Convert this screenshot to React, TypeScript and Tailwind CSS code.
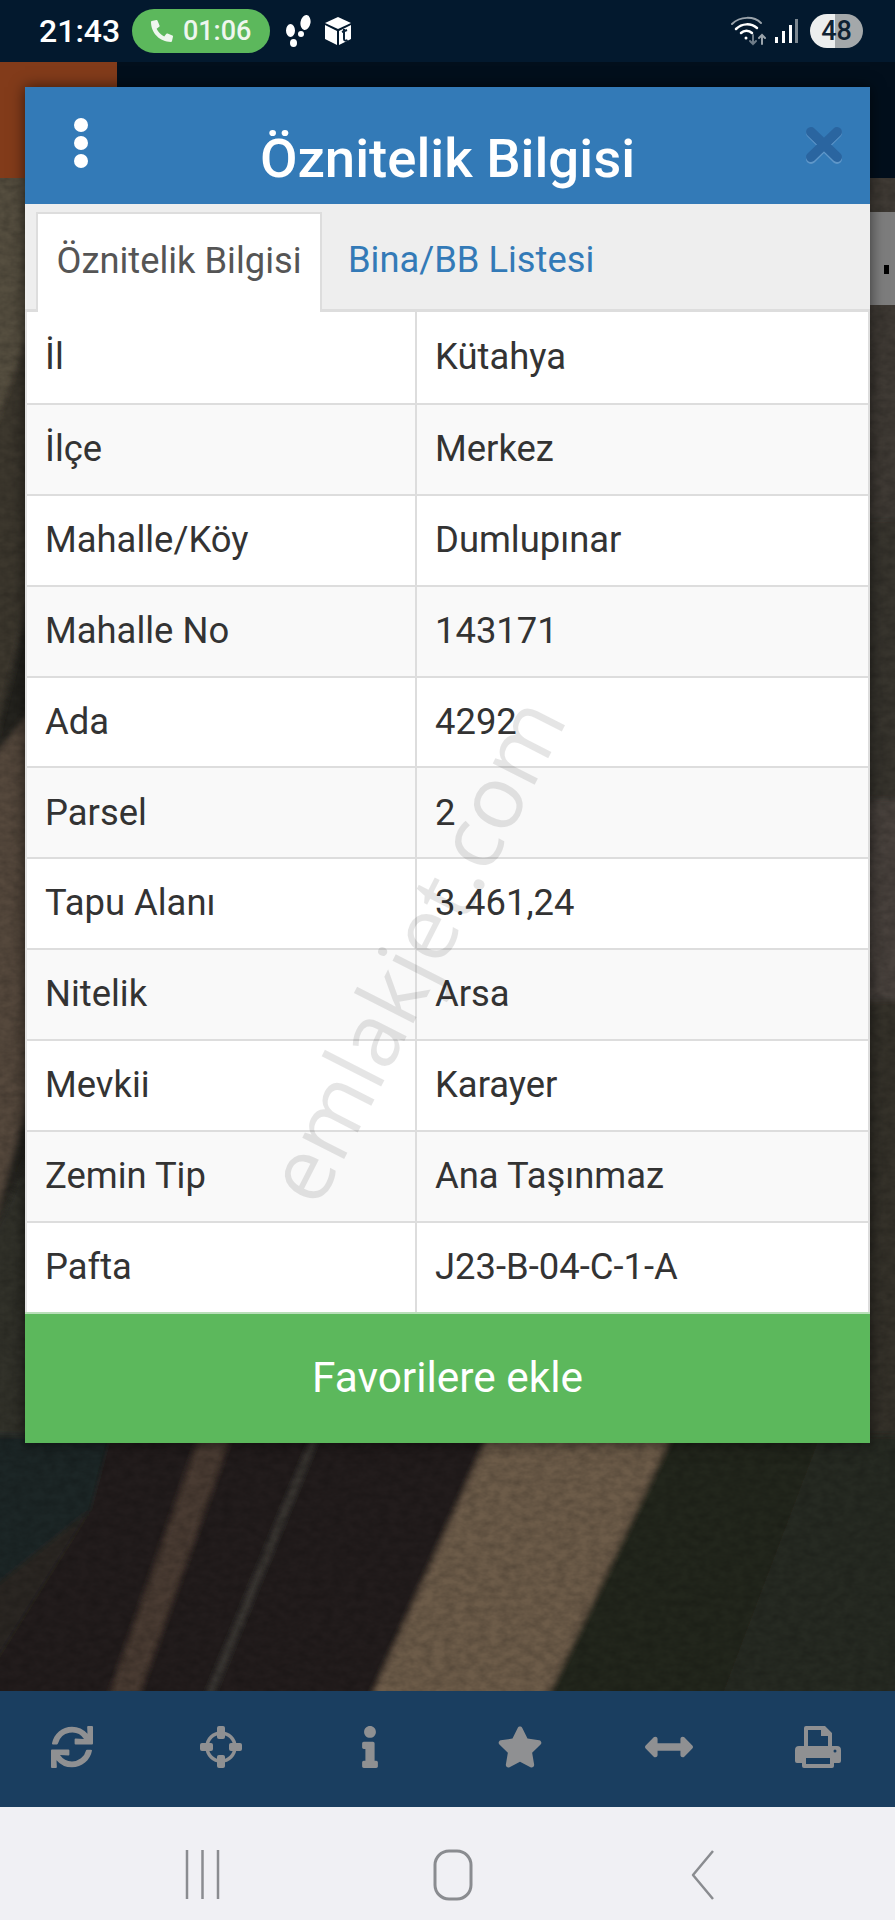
import { FaInfo, FaPhoneAlt, FaStar, FaSync, FaArrowsAltH } from "react-icons/fa"

const rows = [
    ["İl", "Kütahya"],
    ["İlçe", "Merkez"],
    ["Mahalle/Köy", "Dumlupınar"],
    ["Mahalle No", "143171"],
    ["Ada", "4292"],
    ["Parsel", "2"],
    ["Tapu Alanı", "3.461,24"],
    ["Nitelik", "Arsa"],
    ["Mevkii", "Karayer"],
    ["Zemin Tip", "Ana Taşınmaz"],
    ["Pafta", "J23-B-04-C-1-A"],
]

function SatelliteMap() {
    return (
        <svg className="absolute inset-0 w-full h-full" viewBox="0 178 895 1513" preserveAspectRatio="none">
            <defs>
                <filter id="grain" x="0" y="0" width="100%" height="100%">
                    <feTurbulence type="fractalNoise" baseFrequency="0.09 0.14" numOctaves="3" seed="4" />
                    <feColorMatrix values="0 0 0 0 0  0 0 0 0 0  0 0 0 0 0  0 0 0 0.3 -0.08" />
                </filter>
                <filter id="soft" x="-5%" y="-5%" width="110%" height="110%">
                    <feGaussianBlur stdDeviation="3" />
                </filter>
            </defs>
            <rect x="0" y="178" width="895" height="1513" fill="#25241f" />
            <g filter="url(#soft)">
                <polygon points="-10,170 40,170 40,300 -10,440" fill="#57503f" />
                <polygon points="-10,440 40,300 40,560 -10,760" fill="#3c372e" />
                <polygon points="-10,760 40,700 40,1060 -10,1240" fill="#57483c" />
                <polygon points="-10,1240 40,1130 40,1450 -10,1450" fill="#33302a" />
                <polygon points="860,170 905,170 905,520 860,520" fill="#3f3a34" />
                <polygon points="860,520 905,520 905,800 860,800" fill="#38342f" />
                <polygon points="860,800 905,800 905,1000 860,1000" fill="#4a433c" />
                <polygon points="860,1000 905,1000 905,1450 860,1450" fill="#35332c" />
                <polygon points="100,1435 510,1435 395,1700 -10,1700 -10,1560" fill="#241c1b" />
                <polygon points="-10,1435 110,1435 90,1510 -10,1590" fill="#1f2825" />
                <polygon points="-10,1590 90,1510 -10,1670" fill="#2a2623" />
                <polygon points="200,1435 231,1435 137,1700 108,1700" fill="#4a3a31" />
                <polygon points="314,1435 318,1435 210,1700 205,1700" fill="#47453f" />
                <polygon points="489,1435 672,1435 546,1700 370,1700" fill="#6d5c4a" />
                <polygon points="672,1435 905,1435 905,1700 546,1700" fill="#23271d" />
                <polygon points="820,1435 905,1435 905,1700 720,1700" fill="#282920" />
            </g>
            <rect x="0" y="178" width="895" height="1513" filter="url(#grain)" />
        </svg>
    )
}

function StatusIcons() {
    return (
        <div className="flex items-center gap-[12px] ml-[16px]">
            <svg width="26" height="33" viewBox="0 0 26 33" fill="#fff">
                <ellipse cx="4.500" cy="15.500" rx="4.500" ry="6.500" />
                <ellipse cx="7.500" cy="28" rx="3.500" ry="4" />
                <ellipse cx="19.500" cy="7.500" rx="5" ry="7.500" transform="rotate(10 19.500 7.500)" />
                <ellipse cx="15" cy="19" rx="3" ry="3" />
            </svg>
            <svg width="28" height="30" viewBox="0 0 28 30">
                <polygon points="14,1 27,7 14,13 1,7" fill="#fff" />
                <polygon points="1,9 13,15 13,29 1,23" fill="#fff" />
                <polygon points="15,15 27,9 27,23 15,29" fill="#fff" />
                <path d="M20 13v10c0 2 2 2 3.500 1M18 16l5-2" stroke="#0a2238" strokeWidth="2" fill="none" />
            </svg>
        </div>
    )
}

function WifiIcon() {
    return (
        <svg width="36" height="30" viewBox="0 0 36 30" fill="none" stroke="#fff" strokeLinecap="round">
            <path d="M2 8C10 0 24 0 31 7" strokeWidth="2" stroke="#9aa3ab" />
            <path d="M6 13C12 7 21 7 27 12" strokeWidth="2.500" />
            <path d="M11 17C14 14 19 14 22 17" strokeWidth="2.500" />
            <circle cx="16" cy="22" r="1.500" fill="#fff" strokeWidth="0" />
            <path d="M23 19v9M20 25l3 3 3-3" strokeWidth="2" stroke="#6f7c88" />
            <path d="M32 28v-9M29 22l3-3 3 3" strokeWidth="2" stroke="#9aa3ab" />
        </svg>
    )
}

function SignalIcon() {
    return (
        <svg width="24" height="26" viewBox="0 0 24 26" fill="#fff">
            <rect x="1" y="19" width="3" height="6" />
            <rect x="8" y="13" width="3" height="12" />
            <rect x="15" y="7" width="3" height="18" />
            <rect x="21" y="1" width="3" height="24" fill="#7c8790" />
        </svg>
    )
}

function TargetIcon() {
    return (
        <svg width="42" height="42" viewBox="0 0 42 42" fill="#8f9092">
            <circle cx="21" cy="21" r="14" fill="none" stroke="#8f9092" strokeWidth="3.500" />
            <rect x="17" y="0" width="8" height="13" rx="2" />
            <rect x="17" y="29" width="8" height="13" rx="2" />
            <rect x="0" y="17" width="13" height="8" rx="2" />
            <rect x="29" y="17" width="13" height="8" rx="2" />
        </svg>
    )
}

function PrintIcon() {
    return (
        <svg width="46" height="42" viewBox="0 0 46 42" fill="#8f9092">
            <path fillRule="evenodd" d="M9 2a2 2 0 0 1 2-2h19l7 7v13h5a4 4 0 0 1 4 4v11a2 2 0 0 1-2 2h-5v3a2 2 0 0 1-2 2H9a2 2 0 0 1-2-2v-3H2a2 2 0 0 1-2-2V24a4 4 0 0 1 4-4h5V2zm4 2v16h20V10h-7V4H13zm-2 28v6h24v-6H11zm29-8.500a1.500 1.500 0 1 0 0 3 1.500 1.500 0 0 0 0-3z" />
        </svg>
    )
}

export default function App() {
    return (
        <div className="w-[895px] h-[1920px] flex flex-col overflow-hidden font-['Roboto',sans-serif]">
            {/* status bar */}
            <div className="h-[62px] bg-[#03192e] flex items-center pl-[39px] pr-[32px] shrink-0">
                <span className="text-white text-[32px] font-medium leading-none">21:43</span>
                <div className="ml-[12px] w-[138px] h-[44px] rounded-full bg-[#5cb85c] flex items-center justify-center gap-[10px] text-[#eef6ee] text-[27px] font-medium">
                    <FaPhoneAlt className="w-[22px] h-[22px]" />
                    <span>01:06</span>
                </div>
                <StatusIcons />
                <div className="ml-auto flex items-center">
                    <WifiIcon />
                    <div className="ml-[8px]"><SignalIcon /></div>
                    <div className="ml-[12px] w-[53px] h-[34px] rounded-full bg-[linear-gradient(90deg,#eceeee_0,#eceeee_47%,#a4a8aa_47%,#a4a8aa_100%)] flex items-center justify-center text-[#0f2233] text-[27px] font-medium">
                        48
                    </div>
                </div>
            </div>

            <div className="flex-1 relative overflow-hidden bg-[#020f1c]">
                <div className="absolute left-0 right-0 top-[116px] bottom-0">
                    <SatelliteMap />
                </div>
                <div className="absolute left-0 top-0 w-[117px] h-[116px] bg-[#823b1a]" />
                <div className="absolute right-0 top-[150px] w-[40px] h-[93px] bg-[#7d7d7d]">
                    <div className="absolute left-[29px] top-[53px] w-[5px] h-[9px] bg-black" />
                </div>

                {/* modal */}
                <div className="relative mx-[25px] mt-[25px] shadow-[0_0_14px_rgba(0,0,0,0.6)]">
                    <div className="h-[117px] bg-[#337ab7] relative flex items-center justify-center">
                        <div className="absolute left-[49px] top-[31px] flex flex-col gap-[4px]">
                            <span className="w-[14px] h-[14px] rounded-full bg-white" />
                            <span className="w-[14px] h-[14px] rounded-full bg-white" />
                            <span className="w-[14px] h-[14px] rounded-full bg-white" />
                        </div>
                        <h1 className="text-white text-[54.500px] font-medium leading-none pt-[26px]">Öznitelik Bilgisi</h1>
                        <svg className="absolute left-[780px] top-[39px]" width="38" height="38" viewBox="0 0 38 38">
                            <path d="M6 7L32 33M32 7L6 33" stroke="#5f97c9" strokeWidth="10" strokeLinecap="round" />
                            <path d="M6 6L32 31M32 6L6 31" stroke="#2a65a0" strokeWidth="10" strokeLinecap="round" />
                        </svg>
                    </div>

                    <div className="h-[108px] bg-[#eeeeee] border-b-[3px] border-[#dddddd] flex items-end pl-[11px]">
                        <div className="w-[286px] h-[100px] -mb-[3px] bg-white border-2 border-b-0 border-[#dddddd] flex items-center justify-center text-[#555555] text-[36.300px] pb-[4px]">
                            Öznitelik Bilgisi
                        </div>
                        <div className="h-[97px] flex items-center ml-[26px] text-[#337ab7] text-[36.300px]">
                            Bina/BB Listesi
                        </div>
                    </div>

                    <div className="bg-white border-l-2 border-[#e4e4e4]">
                        {rows.map(([label, value], i) => (
                            <div key={label} className={`h-[90.900px] first:h-[92.900px] last:h-[88.900px] flex text-[#333333] text-[36.400px] border-b-2 border-[#dddddd] last:border-b-0 ${i % 2 === 1 ? "bg-[#f9f9f9]" : "bg-white"}`}>
                                <div className="w-[390px] flex items-center pl-[18px] border-r-2 border-[#dddddd]">{label}</div>
                                <div className="flex-1 flex items-center pl-[18px] border-r-2 border-[#dddddd]">{value}</div>
                            </div>
                        ))}
                    </div>

                    <button className="w-full h-[131px] bg-[#5cb85c] border-t-2 border-[#b9dfb9] text-white text-[42.400px] flex items-center justify-center">
                        Favorilere ekle
                    </button>

                    {/* watermark */}
                    <div className="absolute left-[108px] top-[818px] w-[560px] text-center -rotate-[63deg] pointer-events-none font-['Open_Sans',sans-serif] text-[88px] leading-none text-black/10">
                        emlakjet.com
                    </div>
                </div>
            </div>

            {/* bottom toolbar */}
            <div className="h-[116px] bg-[#1a3e60] shrink-0 overflow-hidden">
                <div className="grid grid-cols-6 w-[896px] -ml-[3px] h-full items-center text-[#8f9092] pb-[5px]">
                    <div className="flex justify-center"><FaSync className="w-[42px] h-[42px]" /></div>
                    <div className="flex justify-center"><TargetIcon /></div>
                    <div className="flex justify-center"><FaInfo className="w-[42px] h-[42px]" /></div>
                    <div className="flex justify-center"><FaStar className="w-[46px] h-[46px]" /></div>
                    <div className="flex justify-center"><FaArrowsAltH className="w-[48px] h-[48px]" /></div>
                    <div className="flex justify-center"><PrintIcon /></div>
                </div>
            </div>

            {/* android nav */}
            <div className="h-[113px] bg-[#f0f0f4] shrink-0 flex items-center justify-center">
                <svg width="895" height="113" viewBox="0 0 895 113" fill="none" stroke="#8a8c90" strokeWidth="2.500">
                    <path d="M187 43v49M202.500 43v49M218 43v49" />
                    <rect x="435" y="44" width="36" height="48" rx="14" strokeWidth="3" />
                    <path d="M713 44L693 68L713 92" strokeLinejoin="round" />
                </svg>
            </div>
        </div>
    )
}
